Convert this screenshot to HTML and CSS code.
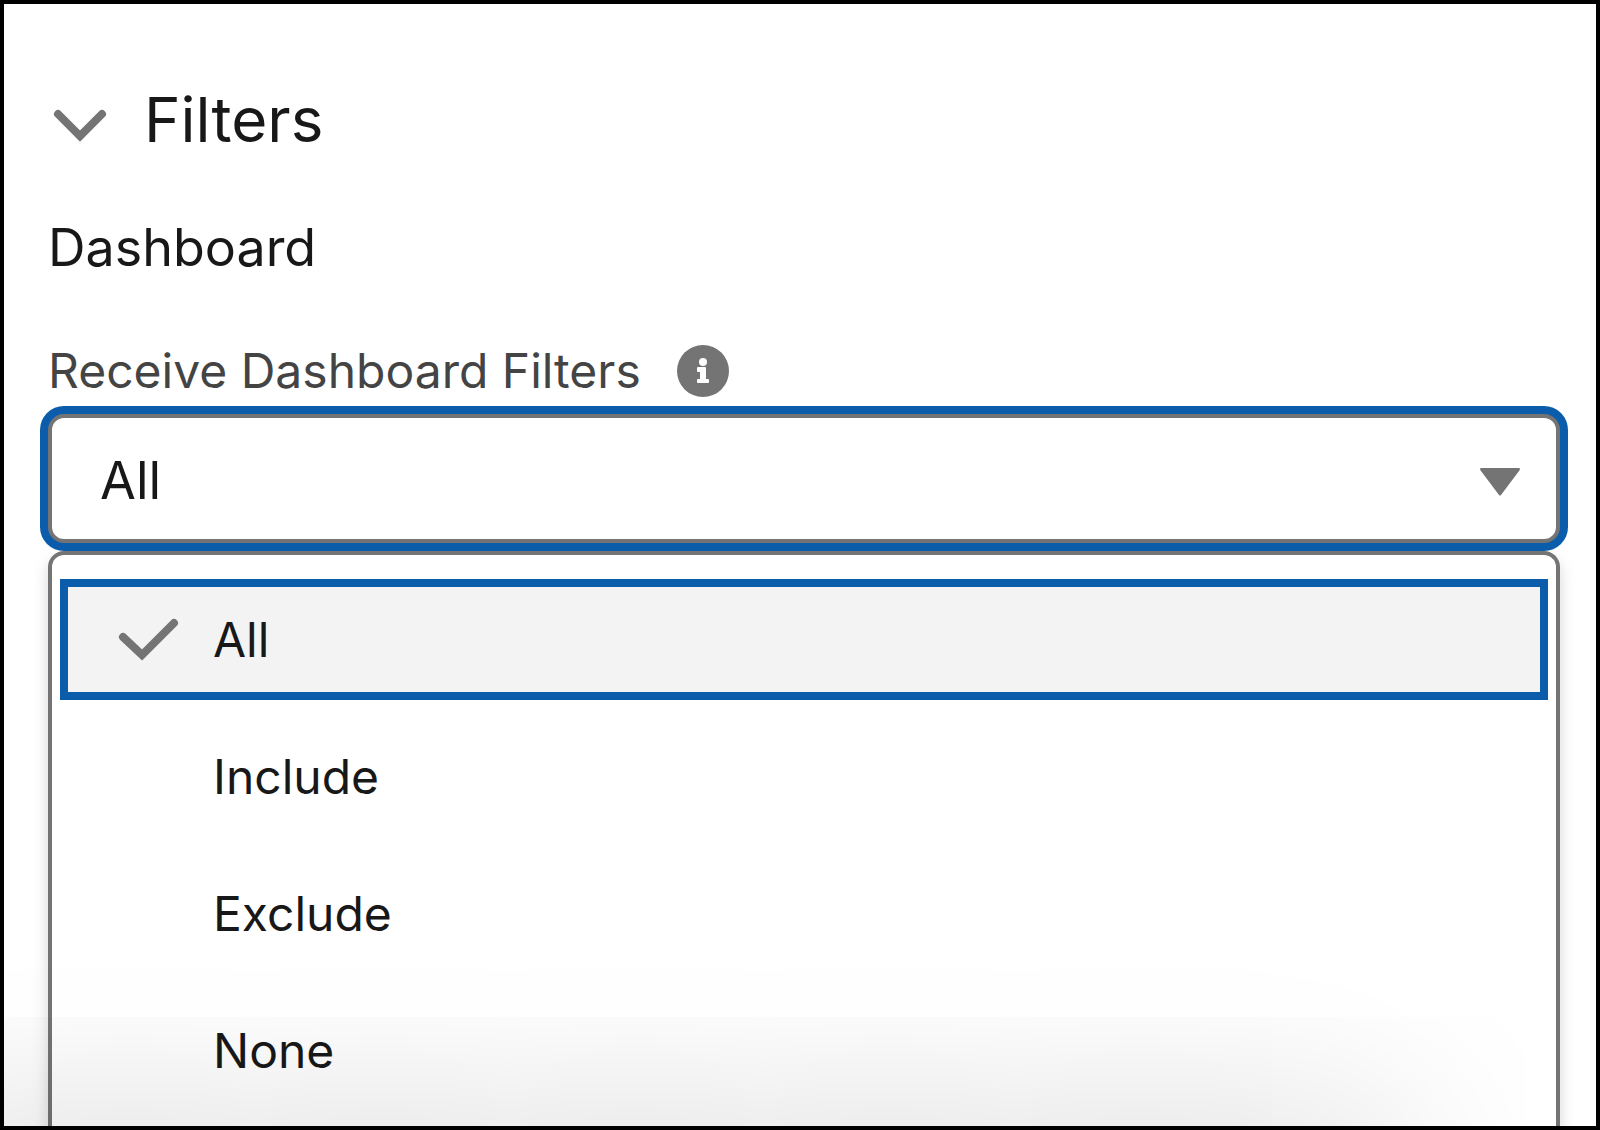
FILE: index.html
```html
<!DOCTYPE html>
<html lang="en">
<head>
    <meta charset="UTF-8">
    <meta name="viewport" content="width=device-width, initial-scale=1.0">
    <title>Filters</title>
    <link rel="stylesheet" href="styles.css">
</head>
<body>
    <main class="panel">
        <h2 class="section-title">
            <button class="section-toggle" type="button" aria-expanded="true">
                <svg class="chevron" viewBox="0 0 64 64" aria-hidden="true">
                    <path d="M10 26 L32 48 L54 26" />
                </svg>
                Filters
            </button>
        </h2>

        <h3 class="group-title">Dashboard</h3>

        <div class="label-row">
            <label for="receiveFilters">Receive Dashboard Filters</label>
            <button class="info-button" type="button" aria-label="Help">
                <svg viewBox="0 0 52 52" aria-hidden="true">
                    <circle class="info-disc" cx="26" cy="26" r="26" />
                    <circle class="info-mark" cx="26" cy="17" r="4" />
                    <path class="info-mark" d="M21 22h7q1 0 1 1v11h2q1 0 1 1v2q0 1-1 1H21q-1 0-1-1v-2q0-1 1-1h2v-7h-2q-1 0-1-1v-3q0-1 1-1z" />
                </svg>
            </button>
        </div>

        <div class="select-wrap">
            <select class="select" id="receiveFilters">
                <option selected>All</option>
                <option>Include</option>
                <option>Exclude</option>
                <option>None</option>
            </select>
            <svg class="select-arrow" viewBox="0 0 40 28" aria-hidden="true">
                <path d="M1 0h38q2 1 0 3L21 27q-1 1-2 0L1 3q-2-2 0-3z" />
            </svg>
        </div>

        <ul class="options" role="listbox" aria-label="Receive Dashboard Filters">
            <li class="option option-active" role="option" aria-selected="true">
                <svg class="check" viewBox="0 0 64 64" aria-hidden="true">
                    <path d="M6 29 L25 47 L57 15" />
                </svg>
                <span>All</span>
            </li>
            <li class="option" role="option" aria-selected="false"><span>Include</span></li>
            <li class="option" role="option" aria-selected="false"><span>Exclude</span></li>
            <li class="option" role="option" aria-selected="false"><span>None</span></li>
        </ul>
    </main>
</body>
</html>
```
FILE: styles.css
```css
* {
    box-sizing: border-box;
}

body {
    margin: 0;
    background: #ffffff;
    color: #181818;
    font-family: Inter, 'Liberation Sans', sans-serif;
}

h2,
h3,
ul {
    margin: 0;
    padding: 0;
    font-weight: 400;
}

button {
    padding: 0;
    border: none;
    background: none;
    color: inherit;
    font: inherit;
    cursor: pointer;
}

.panel {
    position: relative;
    display: flex;
    flex-direction: column;
    height: 100vh;
    padding: 76px 36px 0 44px;
    border: 4px solid #000000;
    overflow: hidden;
}

.panel::after {
    content: '';
    position: absolute;
    top: 100%;
    left: -200px;
    right: 200px;
    height: 400px;
    box-shadow: 0 0 192px rgba(0, 0, 0, 0.17);
    pointer-events: none;
}

.section-title {
    margin-bottom: 56px;
    font-size: 62px;
    line-height: 80px;
}

.section-toggle {
    display: flex;
    align-items: center;
    gap: 32px;
}

.chevron,
.check {
    flex: none;
    width: 64px;
    height: 64px;
    fill: none;
    stroke: #747474;
    stroke-width: 8;
    stroke-linecap: round;
}

.group-title {
    margin-bottom: 61px;
    font-size: 52px;
    line-height: 64px;
}

.label-row {
    display: flex;
    align-items: center;
    gap: 36px;
    margin-bottom: 13px;
    color: #444444;
    font-size: 48px;
    line-height: 60px;
}

.info-button,
.info-button svg {
    display: block;
    width: 52px;
    height: 52px;
}

.info-disc {
    fill: #747474;
}

.info-mark {
    fill: #ffffff;
}

.select-wrap {
    position: relative;
    margin-bottom: 8px;
}

.select {
    display: block;
    width: 100%;
    height: 129px;
    padding: 4px 48px 0;
    appearance: none;
    background: #ffffff;
    border: 4px solid #747474;
    border-radius: 16px;
    outline: none;
    box-shadow: 0 0 0 8px #0b5cab;
    color: inherit;
    font: inherit;
    font-size: 52px;
}

.select-arrow {
    position: absolute;
    top: 54px;
    right: 40px;
    width: 40px;
    height: 28px;
    fill: #747474;
    pointer-events: none;
}

.options {
    display: flex;
    flex: 1;
    flex-direction: column;
    gap: 16px;
    padding: 24px 8px 0;
    border: 4px solid #747474;
    border-bottom: none;
    border-radius: 16px 16px 0 0;
    box-shadow: 0 8px 16px rgba(0, 0, 0, 0.16);
    list-style: none;
}

.option {
    display: flex;
    align-items: center;
    gap: 32px;
    flex: none;
    height: 121px;
    padding: 0 48px 0 153px;
    font-size: 48px;
    line-height: 60px;
}

.option-active {
    padding-left: 57px;
    background: #f3f3f3;
    box-shadow: inset 0 0 0 8px #0b5cab;
}
```
